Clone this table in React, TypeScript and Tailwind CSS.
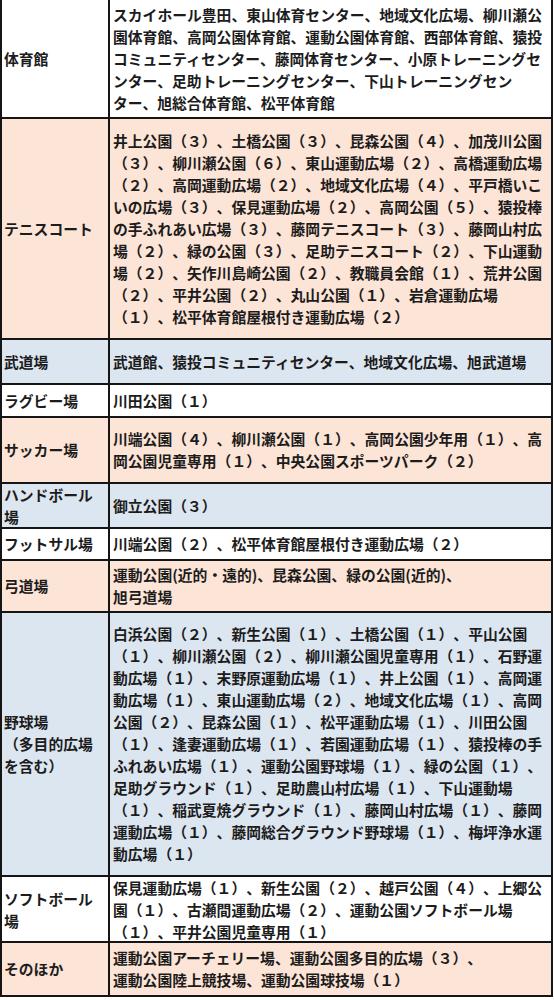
const rows: { label: string[]; lines: string[]; h: number; bg: string }[] = [
  {
    label: ['体育館'],
    h: 119,
    bg: 'bg-white',
    lines: [
      'スカイホール豊田、東山体育センター、地域文化広場、柳川瀬公',
      '園体育館、高岡公園体育館、運動公園体育館、西部体育館、猿投',
      'コミュニティセンター、藤岡体育センター、小原トレーニングセ',
      'ンター、足助トレーニングセンター、下山トレーニングセン',
      'ター、旭総合体育館、松平体育館',
    ],
  },
  {
    label: ['テニスコート'],
    h: 221,
    bg: 'bg-[#fce4d6]',
    lines: [
      '井上公園（３）、土橋公園（３）、昆森公園（４）、加茂川公園',
      '（３）、柳川瀬公園（６）、東山運動広場（２）、高橋運動広場',
      '（２）、高岡運動広場（２）、地域文化広場（４）、平戸橋いこ',
      'いの広場（３）、保見運動広場（２）、高岡公園（５）、猿投棒',
      'の手ふれあい広場（３）、藤岡テニスコート（３）、藤岡山村広',
      '場（２）、緑の公園（３）、足助テニスコート（２）、下山運動',
      '場（２）、矢作川島崎公園（２）、教職員会館（１）、荒井公園',
      '（２）、平井公園（２）、丸山公園（１）、岩倉運動広場',
      '（１）、松平体育館屋根付き運動広場（２）',
    ],
  },
  {
    label: ['武道場'],
    h: 45,
    bg: 'bg-[#dce6f1]',
    lines: ['武道館、猿投コミュニティセンター、地域文化広場、旭武道場'],
  },
  {
    label: ['ラグビー場'],
    h: 33,
    bg: 'bg-white',
    lines: ['川田公園（１）'],
  },
  {
    label: ['サッカー場'],
    h: 66,
    bg: 'bg-[#fce4d6]',
    lines: [
      '川端公園（４）、柳川瀬公園（１）、高岡公園少年用（１）、高',
      '岡公園児童専用（１）、中央公園スポーツパーク（２）',
    ],
  },
  {
    label: ['ハンドボール', '場'],
    h: 45,
    bg: 'bg-[#dce6f1]',
    lines: ['御立公園（３）'],
  },
  {
    label: ['フットサル場'],
    h: 32,
    bg: 'bg-white',
    lines: ['川端公園（２）、松平体育館屋根付き運動広場（２）'],
  },
  {
    label: ['弓道場'],
    h: 52,
    bg: 'bg-[#fce4d6]',
    lines: ['運動公園(近的・遠的)、昆森公園、緑の公園(近的)、', '旭弓道場'],
  },
  {
    label: ['野球場', '（多目的広場', 'を含む）'],
    h: 264,
    bg: 'bg-[#dce6f1]',
    lines: [
      '白浜公園（２）、新生公園（１）、土橋公園（１）、平山公園',
      '（１）、柳川瀬公園（２）、柳川瀬公園児童専用（１）、石野運',
      '動広場（１）、末野原運動広場（１）、井上公園（１）、高岡運',
      '動広場（１）、東山運動広場（２）、地域文化広場（１）、高岡',
      '公園（２）、昆森公園（１）、松平運動広場（１）、川田公園',
      '（１）、逢妻運動広場（１）、若園運動広場（１）、猿投棒の手',
      'ふれあい広場（１）、運動公園野球場（１）、緑の公園（１）、',
      '足助グラウンド（１）、足助農山村広場（１）、下山運動場',
      '（１）、稲武夏焼グラウンド（１）、藤岡山村広場（１）、藤岡',
      '運動広場（１）、藤岡総合グラウンド野球場（１）、梅坪浄水運',
      '動広場（１）',
    ],
  },
  {
    label: ['ソフトボール', '場'],
    h: 66,
    bg: 'bg-white',
    lines: [
      '保見運動広場（１）、新生公園（２）、越戸公園（４）、上郷公',
      '園（１）、古瀬間運動広場（２）、運動公園ソフトボール場',
      '（１）、平井公園児童専用（１）',
    ],
  },
  {
    label: ['そのほか'],
    h: 54,
    bg: 'bg-[#fce4d6]',
    lines: ['運動公園アーチェリー場、運動公園多目的広場（３）、', '運動公園陸上競技場、運動公園球技場（１）'],
  },
];

export default function App() {
  return (
    <div className="w-[554px] min-h-[1000px] bg-white">
      <div
        className="w-[553px] border-x-2 border-[#151515] text-[14.8px] leading-[22px] font-bold text-[#1c1c1c] [text-spacing-trim:space-all]"
        style={{ fontFamily: '"Noto Sans CJK JP", "Noto Sans", sans-serif' }}
      >
        {rows.map((r, i) => (
          <div
            key={i}
            className={`grid grid-cols-[108px_1fr] border-b-2 border-[#151515] ${r.bg}`}
            style={{ height: r.h }}
          >
            <div className="flex flex-col justify-center border-r-2 border-[#151515] pl-[2px]">
              {r.label.map((l, j) => (
                <div key={j} className="whitespace-nowrap">
                  {l}
                </div>
              ))}
            </div>
            <div className="flex flex-col justify-center pl-[3px]">
              {r.lines.map((l, j) => (
                <div key={j} className="whitespace-nowrap">
                  {l}
                </div>
              ))}
            </div>
          </div>
        ))}
      </div>
    </div>
  );
}
